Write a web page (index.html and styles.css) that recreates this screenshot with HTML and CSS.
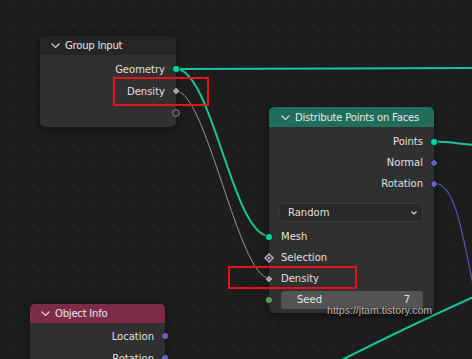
FILE: index.html
```html
<!DOCTYPE html>
<html lang="en">
<head>
<meta charset="utf-8">
<title>Geometry Nodes</title>
<link rel="stylesheet" href="styles.css">
</head>
<body>
<div class="canvas">
  <svg class="links" width="472" height="359" viewBox="0 0 472 359">
    <path class="link geo" d="M176,69 C300,69 360,68 472,68"/>
    <path class="link geo" d="M176,69 C212,69 233,236 269,236"/>
    <path class="link float" d="M176,91 C206,91 239,278 269,278"/>
    <path class="link geo" d="M434,141.5 C450,141.5 460,144 480,145.5"/>
    <path class="link vec" d="M434,183 C455,183 462,230 476,300"/>
    <path class="link geo" d="M330,366 Q400,330 480,294"/>
  </svg>

  <div class="node node-group-input">
    <div class="node-header header-dark">
      <svg class="chev" width="9" height="5" viewBox="0 0 9 5"><polyline points="0.5,0.5 4.5,4.5 8.5,0.5"/></svg>
      <span>Group Input</span>
    </div>
    <div class="node-body body-gi">
      <div class="row out"><span>Geometry</span>
        <svg class="sock sock-r" viewBox="0 0 10 10"><circle cx="5" cy="5" r="3.6" class="c-geo"/></svg></div>
      <div class="row out"><span>Density</span>
        <svg class="sock sock-r" viewBox="0 0 10 10"><polygon points="5,1 9,5 5,9 1,5" class="c-float"/></svg></div>
      <div class="row out">
        <svg class="sock sock-r" viewBox="0 0 10 10"><circle cx="5" cy="5" r="3.4" class="c-empty"/></svg></div>
    </div>
  </div>

  <div class="node node-distribute">
    <div class="node-header header-green">
      <svg class="chev" width="9" height="5" viewBox="0 0 9 5"><polyline points="0.5,0.5 4.5,4.5 8.5,0.5"/></svg>
      <span>Distribute Points on Faces</span>
    </div>
    <div class="node-body body-dist">
      <div class="row out short"><span>Points</span>
        <svg class="sock sock-r" viewBox="0 0 10 10"><circle cx="5" cy="5" r="3.6" class="c-geo"/></svg></div>
      <div class="row out short"><span>Normal</span>
        <svg class="sock sock-r" viewBox="0 0 10 10"><polygon points="5,1 9,5 5,9 1,5" class="c-vec"/></svg></div>
      <div class="row out short"><span>Rotation</span>
        <svg class="sock sock-r" viewBox="0 0 10 10"><polygon points="5,1 9,5 5,9 1,5" class="c-vec"/></svg></div>
      <div class="dropdown"><span>Random</span>
        <svg class="dd-chev" width="6" height="4" viewBox="0 0 6 4"><polyline points="0.5,0.5 3,3 5.5,0.5"/></svg></div>
      <div class="row in short"><span>Mesh</span>
        <svg class="sock sock-l" viewBox="0 0 10 10"><circle cx="5" cy="5" r="3.6" class="c-geo"/></svg></div>
      <div class="row in short"><span>Selection</span>
        <svg class="sock sock-l" viewBox="0 0 10 10"><polygon points="5,1 9,5 5,9 1,5" class="c-bool"/><circle cx="5" cy="5" r="1.2" class="c-bool-dot"/></svg></div>
      <div class="row in short"><span>Density</span>
        <svg class="sock sock-l" viewBox="0 0 10 10"><polygon points="5,1 9,5 5,9 1,5" class="c-float"/></svg></div>
      <div class="row in short seed-row">
        <svg class="sock sock-l" viewBox="0 0 10 10"><circle cx="5" cy="5" r="3.6" class="c-int"/></svg>
        <div class="field"><span>Seed</span><span>7</span></div>
      </div>
    </div>
  </div>

  <div class="node node-object-info">
    <div class="node-header header-red">
      <svg class="chev" width="9" height="5" viewBox="0 0 9 5"><polyline points="0.5,0.5 4.5,4.5 8.5,0.5"/></svg>
      <span>Object Info</span>
    </div>
    <div class="node-body body-oi">
      <div class="row out"><span>Location</span>
        <svg class="sock sock-r" viewBox="0 0 10 10"><circle cx="5" cy="5" r="3.6" class="c-vec"/></svg></div>
      <div class="row out"><span>Rotation</span>
        <svg class="sock sock-r" viewBox="0 0 10 10"><circle cx="5" cy="5" r="3.6" class="c-vec"/></svg></div>
    </div>
  </div>

  <div class="highlight hl-group"></div>
  <div class="highlight hl-dist"></div>
  <div class="watermark">https://jtam.tistory.com</div>
</div>
</body>
</html>
```

FILE: styles.css
```css
html, body {
  margin: 0;
  padding: 0;
  width: 472px;
  height: 359px;
  overflow: hidden;
  background: #1d1d1d;
}

.canvas {
  position: relative;
  width: 472px;
  height: 359px;
  overflow: hidden;
  background-color: #1d1d1d;
  background-image: radial-gradient(circle, #282828 0.9px, transparent 1.3px);
  background-size: 20px 20px;
  background-position: 3px 15px;
  font-family: "DejaVu Sans", sans-serif;
  font-size: 10px;
  color: #e0e0e0;
}

.links {
  position: absolute;
  left: 0;
  top: 0;
}

.link { fill: none; }
.link.geo { stroke: #15c99b; stroke-width: 2; }
.link.float { stroke: #949494; stroke-width: 1; }
.link.vec { stroke: #5656c0; stroke-width: 1.2; }

.node {
  position: absolute;
  background: #303030;
  border-radius: 5px;
  box-shadow: 0 0 0 1px #161616, 0 3px 8px rgba(0, 0, 0, 0.45);
}

.node-group-input { left: 40px; top: 36px; width: 136px; }
.node-distribute { left: 269px; top: 107px; width: 165px; }
.node-object-info { left: 30px; top: 304px; width: 135px; height: 80px; }

.node-header {
  display: flex;
  align-items: center;
  gap: 5px;
  height: 19px;
  padding-left: 11px;
  border-radius: 5px 5px 0 0;
  color: #e8e8e8;
  letter-spacing: -0.2px;
}

.header-dark { background: #252525; }
.header-green { background: #1f6d5a; height: 20px; padding-left: 12px; }
.header-red { background: #7e2b47; }

.chev polyline,
.dd-chev polyline {
  fill: none;
  stroke: #d8d8d8;
  stroke-width: 1.1;
}

.node-body {
  display: flex;
  flex-direction: column;
}

.body-gi { padding: 3px 0 3px; }
.body-dist { padding: 4px 0 3px; }
.body-oi { padding: 2px 0 0; }

.row {
  position: relative;
  display: flex;
  align-items: center;
  height: 22px;
  white-space: nowrap;
}

.row.short { height: 21px; }

.row.out {
  justify-content: flex-end;
  padding-right: 11px;
}

.row.in {
  justify-content: flex-start;
  padding-left: 12px;
}

.sock {
  position: absolute;
  top: 50%;
  width: 10px;
  height: 10px;
  margin-top: -5px;
}

.sock-r { right: -5px; }
.sock-l { left: -5px; }

.c-geo { fill: #00d6a3; stroke: #141414; stroke-width: 0.8; }
.c-vec { fill: #6363c7; stroke: #141414; stroke-width: 0.8; }
.c-float { fill: #a1a1a1; stroke: #141414; stroke-width: 0.8; }
.c-int { fill: #5e9c5b; stroke: #141414; stroke-width: 0.8; }
.c-bool { fill: #2c2c2c; stroke: #cca6d6; stroke-width: 1.4; }
.c-bool-dot { fill: #cca6d6; }
.c-empty { fill: #2a2a2a; stroke: #8f8f8f; stroke-width: 1; }

.dropdown {
  display: flex;
  align-items: center;
  justify-content: space-between;
  height: 19px;
  box-sizing: border-box;
  margin: 9px 11px 4px 10px;
  padding: 0 5px 0 8px;
  background: #282828;
  border: 1px solid #3a3a3a;
  border-radius: 4px;
}

.seed-row {
  padding-right: 11px;
  padding-left: 10px;
}

.field {
  flex: 1;
  display: flex;
  justify-content: space-between;
  align-items: center;
  height: 18px;
  padding: 0 13px 0 16px;
  background: #545454;
  border-radius: 4px;
  color: #e8e8e8;
}

.highlight {
  position: absolute;
  box-sizing: border-box;
  border: 2px solid #e3141c;
}

.hl-group { left: 113px; top: 77px; width: 96px; height: 29px; }
.hl-dist { left: 228px; top: 266px; width: 129px; height: 23px; }

.watermark {
  position: absolute;
  left: 327px;
  top: 304px;
  font-family: "Liberation Sans", sans-serif;
  font-size: 10.6px;
  color: rgba(220, 220, 220, 0.82);
  text-shadow: 0 0 2px rgba(0, 0, 0, 0.9);
  white-space: nowrap;
}
```
